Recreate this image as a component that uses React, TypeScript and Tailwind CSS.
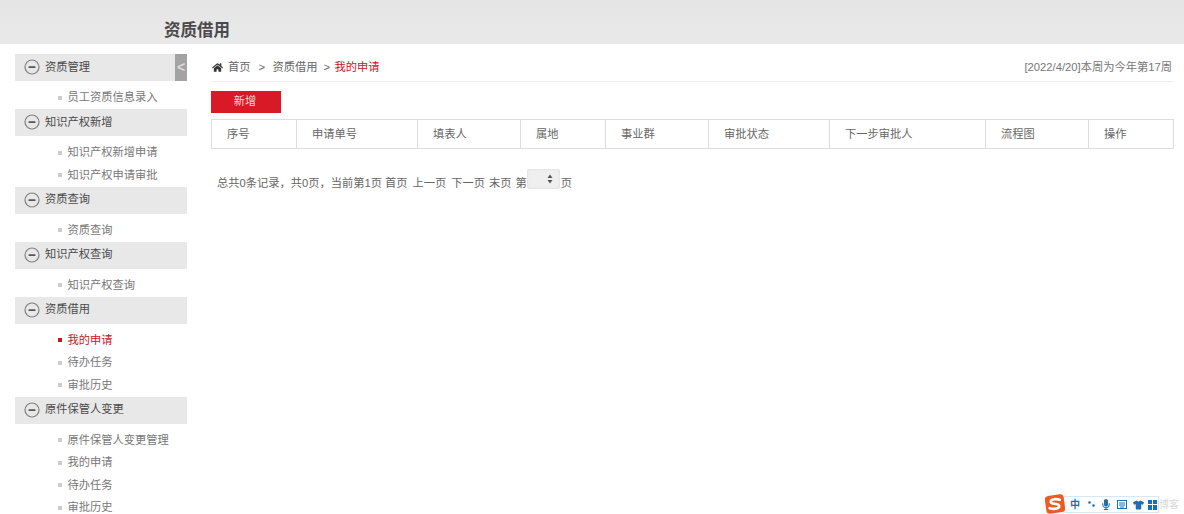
import React from "react";
import { FaHome } from "react-icons/fa";
import { FaMicrophone, FaTshirt } from "react-icons/fa";

const font = { fontFamily: '"Liberation Sans","Noto Sans CJK SC",sans-serif' };

const groups: { title: string; items: string[]; active?: number }[] = [
  { title: "资质管理", items: ["员工资质信息录入"] },
  { title: "知识产权新增", items: ["知识产权新增申请", "知识产权申请审批"] },
  { title: "资质查询", items: ["资质查询"] },
  { title: "知识产权查询", items: ["知识产权查询"] },
  { title: "资质借用", items: ["我的申请", "待办任务", "审批历史"], active: 0 },
  { title: "原件保管人变更", items: ["原件保管人变更管理", "我的申请", "待办任务", "审批历史"] },
];

const cols: [string, number][] = [
  ["序号", 85],
  ["申请单号", 121],
  ["填表人", 103],
  ["属地", 85],
  ["事业群", 103],
  ["审批状态", 121],
  ["下一步审批人", 156],
  ["流程图", 103],
  ["操作", 86],
];

function MinusCircle() {
  return (
    <svg width="16" height="16" viewBox="0 0 16 16" className="shrink-0">
      <circle cx="8" cy="8" r="7" fill="none" stroke="#808080" strokeWidth="1.2" />
      <rect x="4.5" y="7.2" width="7" height="1.7" rx="0.5" fill="#555" />
    </svg>
  );
}

function Sogou() {
  return (
    <div className="absolute left-[1045px] top-[494px] flex items-center">
      <svg width="20" height="20" viewBox="0 0 19 19" className="relative z-10 -mr-[2px]">
        <rect x="0.5" y="1" width="18" height="17" rx="3.5" fill="#ee5a24" transform="rotate(-8 9.5 9.5)" />
        <path d="M14 5.5C11 4.5 5.5 4.5 5.5 7.5C5.5 10 13.5 8.5 13.5 11.5C13.5 14.5 7.5 14.5 4.5 13.5" fill="none" stroke="#fff" strokeWidth="2.6" strokeLinecap="round" />
      </svg>
      <div className="relative mt-[1px] h-[17px] w-[96px] border border-[#d9e7f3] bg-white/80 text-[#1a6fb5]">
        <div className="flex h-full items-center pl-[6px]">
          <span className="w-[10px] text-[10px] font-bold leading-none">中</span>
          <svg width="7" height="7" viewBox="0 0 7 7" className="ml-[8px]">
            <circle cx="1.5" cy="1.5" r="1.3" fill="#1a6fb5" />
            <circle cx="5.5" cy="4.5" r="1.3" fill="#1a6fb5" />
          </svg>
          <FaMicrophone className="ml-[7px] h-[11px] w-[8px]" />
          <svg width="10" height="9" viewBox="0 0 10 9" className="ml-[7px]">
            <rect x="0.5" y="0.5" width="9" height="8" fill="none" stroke="#1a6fb5" />
            <path d="M2 3h6M2 5h6M3 7h4" stroke="#1a6fb5" />
          </svg>
          <FaTshirt className="ml-[6px] h-[10px] w-[11px]" />
          <svg width="9" height="10" viewBox="0 0 9 10" fill="#1a6fb5" className="ml-[4px]">
            <rect x="0" y="0" width="4" height="4" />
            <rect x="5" y="0" width="4" height="4" />
            <rect x="0" y="5" width="4" height="5" />
            <rect x="5" y="5" width="4" height="5" />
          </svg>
        </div>
      </div>
      <span className="absolute left-[114px] top-[3px] whitespace-nowrap text-[10px] text-[#d8d8d8]">博客</span>
    </div>
  );
}

export default function App() {
  return (
    <div style={font} className="relative h-[514px] w-[1184px] overflow-hidden bg-white text-[11.25px] text-[#666]">
      <header className="flex h-[44px] items-end bg-gradient-to-b from-[#e5e5e5] to-[#e9e9e9] pb-[2px] pl-[164px]">
        <h1 className="text-[16.5px] font-bold leading-[24px] text-[#4a4a4a]">资质借用</h1>
      </header>
      <div className="flex pt-[10px]">
        <aside className="relative ml-[15px] w-[172px] shrink-0">
          {groups.map((g) => (
            <div key={g.title}>
              <div className="flex h-[27px] items-center gap-[5px] bg-[#e8e8e8] pb-[1px] pl-[9px] text-[#4a4a4a]">
                <MinusCircle />
                <span>{g.title}</span>
              </div>
              <ul className="pt-[5.5px]">
                {g.items.map((it, i) => (
                  <li
                    key={it + i}
                    className={`flex h-[22.5px] items-center gap-[6px] pl-[42.5px] ${g.active === i ? "text-[#c8161d]" : "text-[#777]"}`}
                  >
                    <span className={`h-[4px] w-[4px] ${g.active === i ? "bg-[#c8161d]" : "bg-[#ccc]"}`} />
                    <span>{it}</span>
                  </li>
                ))}
              </ul>
            </div>
          ))}
          <div className="absolute right-0 top-0 flex h-[27px] w-[12px] items-center justify-center bg-[#a3a3a3] text-[14px] font-bold text-[#ddd]">
            &lt;
          </div>
        </aside>
        <main className="ml-[24px] w-[963px] shrink-0">
          <div className="flex h-[28px] items-center justify-between border-b border-[#eee] pr-[2px]">
            <div className="flex items-center text-[#666]">
              <FaHome className="ml-[1px] mr-[5px] h-[11px] w-[11px] text-[#333]" />
              <span>首页</span>
              <span className="ml-[8px] mr-[8px] w-[6px]">&gt;</span>
              <span>资质借用</span>
              <span className="ml-[6px] mr-[5px] w-[6px]">&gt;</span>
              <span className="text-[#c8161d]">我的申请</span>
            </div>
            <span className="text-[#777]">[2022/4/20]本周为今年第17周</span>
          </div>
          <button className="mt-[9px] block h-[22px] w-[70px] bg-[#d71a26] pb-[1px] pr-[2px] text-[#f5d5d5]">新增</button>
          <div className="mt-[6px] flex h-[30px] border border-[#ddd]">
            {cols.map(([t, w], i) => (
              <div
                key={t}
                style={{ width: w }}
                className={`flex shrink-0 items-center pl-[15px] text-[#666] ${i < cols.length - 1 ? "border-r border-[#ddd]" : ""}`}
              >
                {t}
              </div>
            ))}
          </div>
          <div className="mt-[22px] flex h-[24px] items-center pl-[6px] text-[#666]">
            <span>总共0条记录，共0页，当前第1页</span>
            <span className="ml-[3px]">首页</span>
            <span className="ml-[5px]">上一页</span>
            <span className="ml-[5px]">下一页</span>
            <span className="ml-[4px]">末页</span>
            <span className="ml-[4px]">第</span>
            <span className="flex h-[20px] w-[33px] -translate-y-[4px] items-center justify-end rounded-[3px] bg-[#efefef] pr-[7px] shadow-[inset_0_0_2px_#ccc]">
              <svg width="6" height="10" viewBox="0 0 6 10" fill="#555">
                <path d="M3 0.5L5.5 4H0.5z" />
                <path d="M3 9.5L5.5 6H0.5z" />
              </svg>
            </span>
            <span className="ml-[1px]">页</span>
          </div>
        </main>
      </div>
      <Sogou />
    </div>
  );
}
